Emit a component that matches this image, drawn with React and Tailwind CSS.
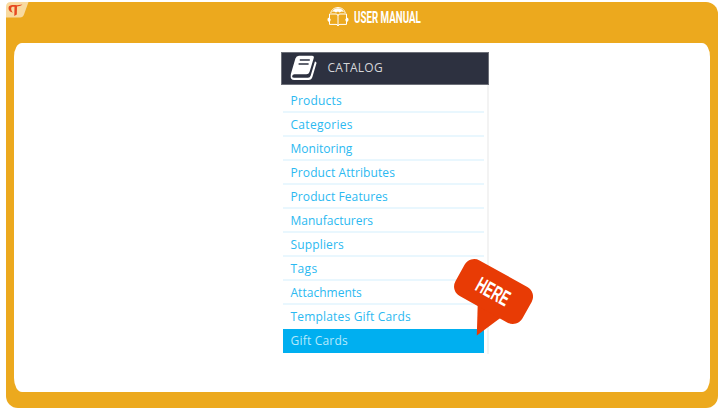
const items = [
  { name: 'Products', tracking: 'tracking-[0.2px]' },
  { name: 'Categories', tracking: 'tracking-[0.3px]' },
  { name: 'Monitoring', tracking: 'tracking-[0.02px]' },
  { name: 'Product Attributes', tracking: 'tracking-[0.1px]' },
  { name: 'Product Features', tracking: 'tracking-[0.1px]' },
  { name: 'Manufacturers', tracking: 'tracking-[0px]' },
  { name: 'Suppliers', tracking: 'tracking-[0.15px]' },
  { name: 'Tags', tracking: 'tracking-[0.4px]' },
  { name: 'Attachments', tracking: 'tracking-[0.02px]' },
  { name: 'Templates Gift Cards', tracking: 'tracking-[0.18px]', last: true },
  { name: 'Gift Cards', tracking: 'tracking-[0.2px]', active: true },
];

function rowStyle(item) {
  if (item.active) return 'bg-[#00aff0] text-[#b5e9fc]';
  if (item.last) return 'text-[#2bb9f1]';
  return 'border-b-2 border-[#e9f7fe] text-[#2bb9f1]';
}

function BrandTab() {
  return (
    <svg className="absolute top-0 left-0 h-4 w-[23px]" viewBox="0 0 23 16">
      <path d="M5 0H22.5L18 12.5Q17 15.5 14 15.5H0V5Q0 0 5 0Z" fill="#f8daa0" />
      <path d="M3 4.2C4.5 2.8 8 2.8 11 3.2L16.5 2.6C14.5 4.3 12.5 4.5 11 4.5L10.8 12.5L8.3 14L8.5 4.8C6 4.4 5.2 5 5.2 6.5C5.2 8.3 5.8 9.5 7 10.6C3.4 10.2 1.7 7 3 4.2Z" fill="#e6481f" />
    </svg>
  );
}

function ReaderIcon() {
  return (
    <svg className="h-5 w-[22px]" viewBox="0 0 22 20" fill="none" stroke="#fff" strokeWidth="1">
      <path d="M3.8 6C4.6 2 8 .6 11 .6S17.4 2 18.2 6" />
      <path d="M5 5C6.2 2.8 8 1.3 11 1.3S15.8 2.8 17 5L14.5 4.5L12.5 5.5L11 4.5L9 5.5L7 4.5Z" fill="#fff" stroke="none" />
      <path d="M2.5 7H9Q11 7 11 8.8Q11 7 13 7H19.5V17.4H13Q11 17.4 11 19Q11 17.4 9 17.4H2.5ZM11 8.5V19" />
      <path d="M2.5 10.5C1 10.5 .5 11.5 .5 12.7S1.2 15 2.8 15L3.8 12.8ZM19.5 10.5C21 10.5 21.5 11.5 21.5 12.7S20.8 15 19.2 15L18.2 12.8Z" fill="#fff" stroke="none" />
    </svg>
  );
}

function BookIcon() {
  return (
    <svg className="h-[26px] w-7" viewBox="0 0 28 26" fill="none">
      <path d="M9 .8H22Q24.5 .8 23.7 3.3L19.5 17Q18.8 19.3 16.3 19.3H4.4Q2.5 19.3 2.1 21.2Q2 22.7 4.2 22.7H18Q20 22.7 20.6 20.7L25 6.3L26.6 7.7L22.4 22Q21.5 25 18.7 25H4.2Q.4 24.8 .7 21Q.7 19 1.6 16.5L5.4 3.5Q6.3 .8 9 .8Z" fill="#fff" />
      <path d="M9.8 5H19.8M8.6 9H18.6" stroke="#2d3140" strokeWidth="1.5" />
    </svg>
  );
}

function HereBubble() {
  return (
    <svg className="absolute top-[255px] left-[450px] h-[84px] w-[88px] overflow-visible" viewBox="450 255 88 84">
      <path d="M477.8 302L476.8 335.5L501 317.5Z" fill="#e83b05" />
      <rect x="455.2" y="271.1" width="76.7" height="40.8" rx="11" fill="#e83b05" transform="rotate(29 493.5 291.5)" />
      <text x="475.4" y="299.3" transform="rotate(29 493.5 291.5)" textLength="35.5" lengthAdjust="spacingAndGlyphs" fill="#fff" fontSize="22" fontWeight="700" fontFamily="'Liberation Sans', sans-serif">HERE</text>
    </svg>
  );
}

export default function App() {
  return (
    <div className="relative h-[410px] w-[721px] overflow-hidden bg-white pt-[2px] pl-[6px] font-['Open_Sans',sans-serif]">
      <main className="relative h-[405.5px] w-[711.5px] rounded-[12px] bg-[#eca91e] px-[8px]">
        <BrandTab />
        <header className="flex h-[40.6px] items-start pt-[4.5px] pl-[312.5px]">
          <ReaderIcon />
          <h1 className="ml-[5px] h-5 w-[115px] origin-left scale-x-[0.61] font-['Roboto',sans-serif] text-[16px] leading-[21px] font-bold whitespace-nowrap text-white">USER MANUAL</h1>
        </header>
        <section className="h-[349px] w-[696px] rounded-[8px/14px] bg-white pt-[9px] pl-[266.5px]">
          <div className="h-[302px] w-[208px] border-r-2 border-[#f3f3f3]">
            <h2 className="flex h-[33px] w-[208px] items-center border border-[#6c6f78] bg-[#2d3140] pl-[8px] text-[12px] text-[#d5d6d9]">
              <BookIcon />
              <span className="ml-[10px] -translate-y-[0.5px] tracking-[0.25px]">CATALOG</span>
            </h2>
            <ul className="w-[203px] pt-[4px] pl-[2px]">
              {items.map((item) => (
                <li key={item.name} className={`h-6 pl-2 text-[12px] leading-[24px] font-medium ${item.tracking} ${rowStyle(item)}`}>
                  {item.name}
                </li>
              ))}
            </ul>
          </div>
        </section>
      </main>
      <HereBubble />
    </div>
  );
}
